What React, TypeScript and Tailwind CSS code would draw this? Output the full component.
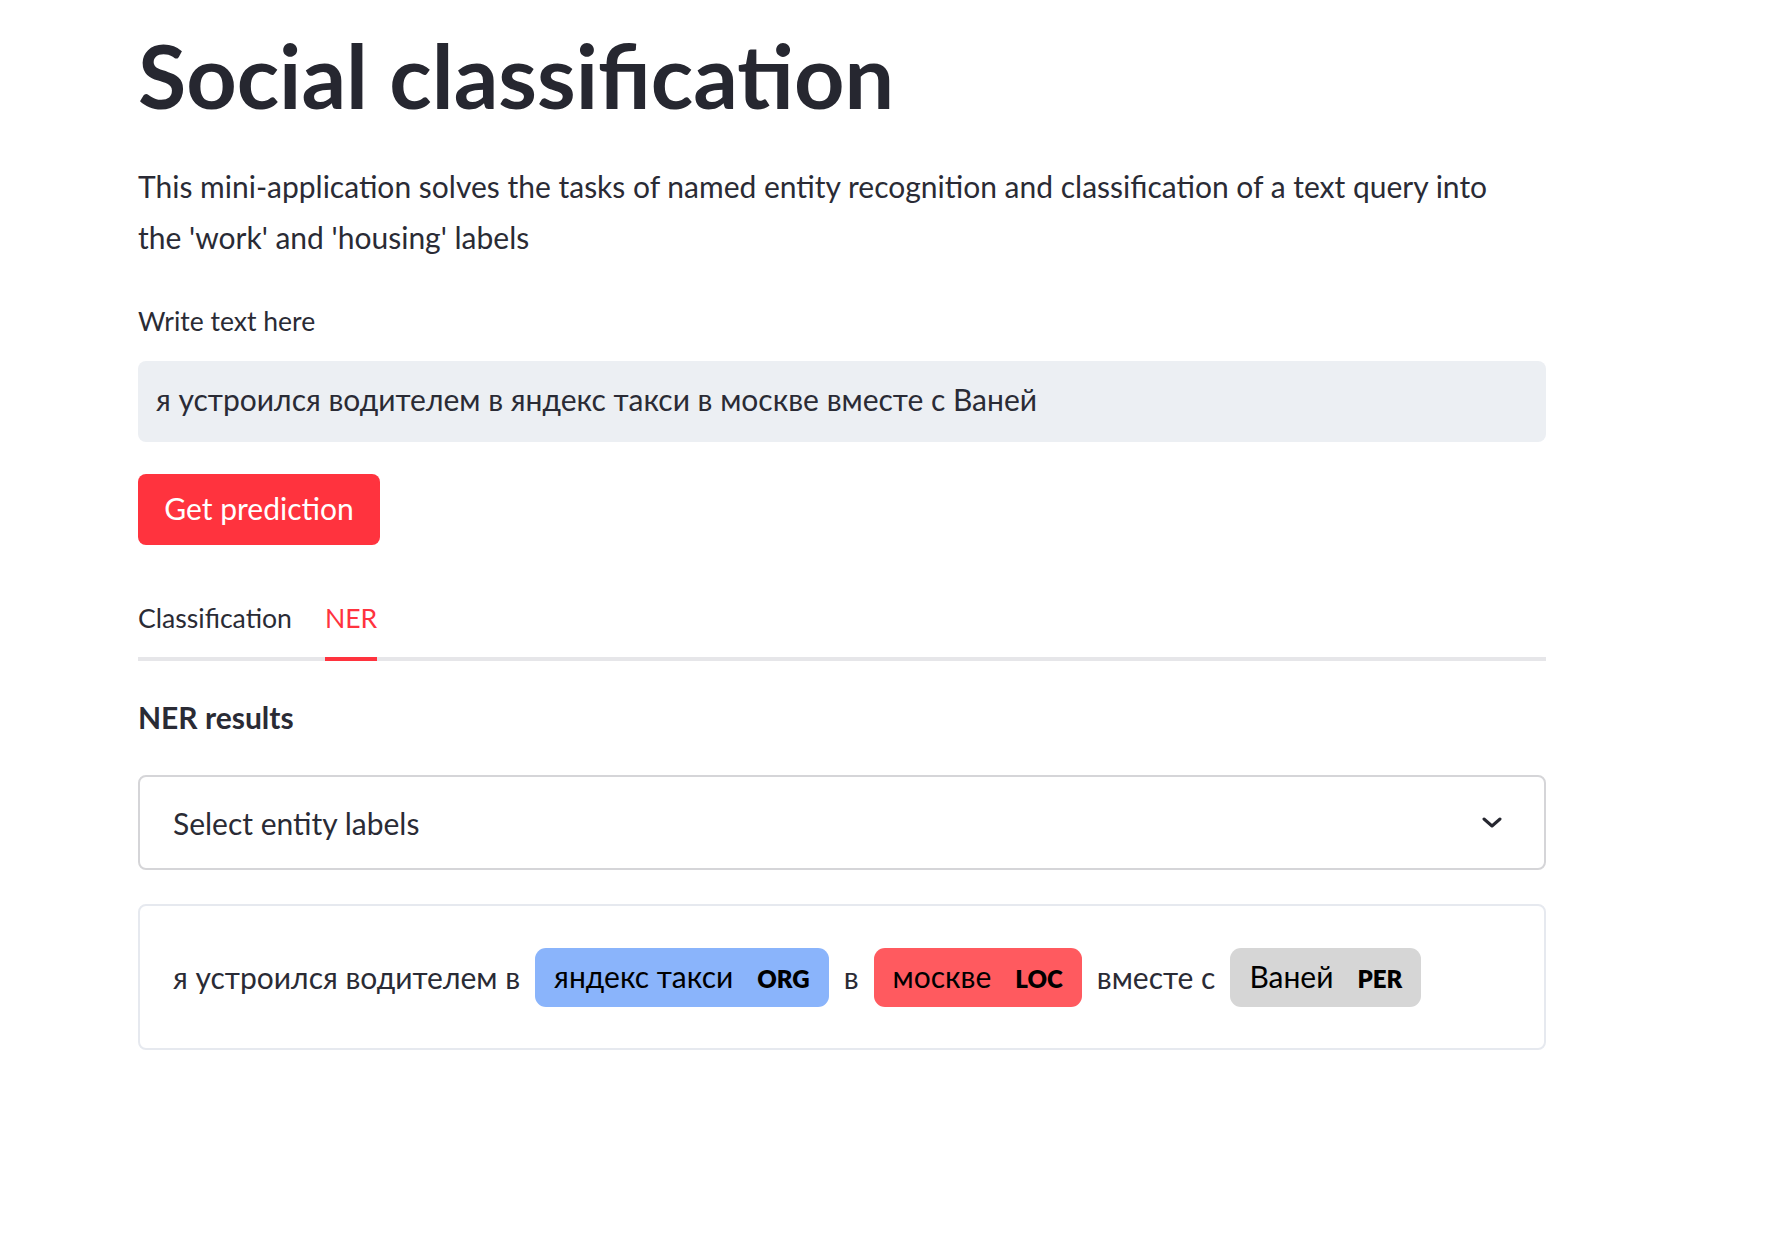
const entities = [
  { type: "text", text: "я устроился водителем в" },
  { type: "ent", text: "яндекс такси", label: "ORG", color: "bg-[#8ab4fb]" },
  { type: "text", text: "в" },
  { type: "ent", text: "москве", label: "LOC", color: "bg-[#ff5a5f]" },
  { type: "text", text: "вместе с" },
  { type: "ent", text: "Ваней", label: "PER", color: "bg-[#d6d6d6]" },
];

function Tabs() {
  const tabs = ["Classification", "NER"];
  const active = "NER";
  return (
    <div className="mt-[55px] flex gap-[33px] shadow-[inset_0_-4px_0_#e6e6e9]">
      {tabs.map((t) => (
        <div
          key={t}
          className={
            "border-b-4 pb-[21px] text-[26.6px] leading-[36px] " +
            (t === active ? "border-[#ff333e] text-[#ff333e]" : "border-transparent")
          }
        >
          {t}
        </div>
      ))}
    </div>
  );
}

function NerView() {
  return (
    <div className="mt-[34px] flex h-[146px] items-center gap-[15px] rounded-[8px] border-2 border-[#e6e9ef] px-[33px] text-[30px] leading-[36px]">
      {entities.map((e, i) =>
        e.type === "text" ? (
          <span key={i}>{e.text}</span>
        ) : (
          <span
            key={i}
            className={"inline-flex h-[59px] items-center rounded-[11px] px-[19px] text-black " + e.color}
          >
            <span className="flex items-baseline">
              <span>{e.text}</span>
              <span className="ml-[24px] text-[24px] font-extrabold">{e.label}</span>
            </span>
          </span>
        )
      )}
    </div>
  );
}

export default function App() {
  return (
    <div className="min-h-screen bg-white font-[Lato,sans-serif] text-[#2a2b35]">
      <div className="ml-[138px] w-[1408px] pt-[23px]">
        <h1 className="text-[88px] font-bold leading-[1.2] text-[#262730]">Social classification</h1>
        <p className="mt-[32px] max-w-[1375px] text-[30px] leading-[51.2px]">
          This mini-application solves the tasks of named entity recognition and classification of a text query into
          the 'work' and 'housing' labels
        </p>

        <label className="mt-[40px] block text-[26.5px] leading-[36px]">Write text here</label>
        <div className="mt-[22px] flex h-[81px] items-center rounded-[8px] bg-[#eceff3] px-[18px] pb-[5px] text-[30px] leading-[36px]">
          я устроился водителем в яндекс такси в москве вместе с Ваней
        </div>

        <button className="mt-[32px] flex h-[71px] w-[242px] items-center justify-center rounded-[8px] bg-[#ff333e] pb-[4px] text-[30px] leading-[36px] text-white">
          Get prediction
        </button>

        <Tabs />

        <h3 className="mt-[38px] text-[30px] font-bold leading-[36px]">NER results</h3>

        <div className="mt-[40px] flex h-[95px] items-center justify-between rounded-[8px] border-2 border-[#d5d5d8] pl-[33px] pr-[42px]">
          <span className="text-[30px] leading-[36px]">Select entity labels</span>
          <svg width="20" height="11" viewBox="0 0 20 11" fill="none">
            <path d="M2 2l8 7 8-7" stroke="#262730" strokeWidth="3" strokeLinecap="round" strokeLinejoin="round" />
          </svg>
        </div>

        <NerView />
      </div>
    </div>
  );
}
